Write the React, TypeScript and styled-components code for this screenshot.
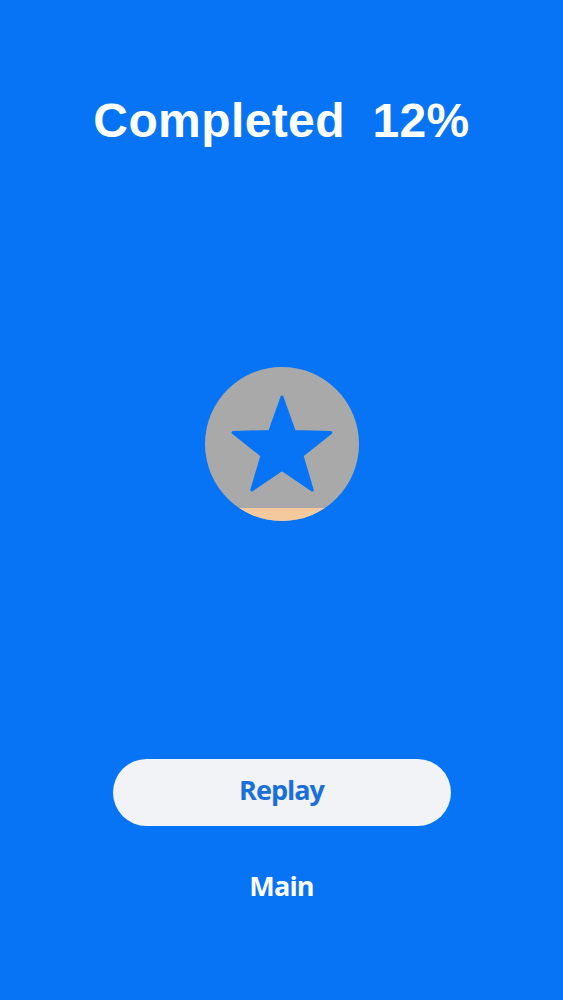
import styled, { createGlobalStyle } from "styled-components";

const GlobalStyle = createGlobalStyle`
  html, body {
    margin: 0;
    padding: 0;
    background: #0674f4;
  }
`;

const Screen = styled.div`
  width: 563px;
  height: 1000px;
  background: #0674f4;
  display: flex;
  flex-direction: column;
  align-items: center;
  font-family: "Liberation Sans", Arial, sans-serif;
`;

const Title = styled.h1`
  margin: 96px 0 0;
  font-size: 48px;
  line-height: 50px;
  font-weight: 700;
  color: #ffffff;
  white-space: pre;
  letter-spacing: 0.4px;
`;

const Badge = styled.div`
  margin-top: 221px;
  width: 154px;
  height: 154px;
  border-radius: 50%;
  overflow: hidden;
  background: #a9a9a9;
  display: grid;
`;

const Fill = styled.div<{ $height: number }>`
  grid-area: 1 / 1;
  align-self: end;
  height: ${(p) => p.$height}px;
  background: #f4c99d;
`;

const Star = styled.svg`
  grid-area: 1 / 1;
  width: 154px;
  height: 154px;
`;

const ReplayButton = styled.button`
  margin-top: 238px;
  width: 338px;
  height: 67px;
  padding: 0 0 6px;
  border: none;
  border-radius: 34px;
  background: #f2f3f6;
  color: #1b6fd9;
  font-family: "Open Sans", "Noto Sans", sans-serif;
  font-weight: 700;
  font-size: 27px;
  letter-spacing: -1px;
  cursor: pointer;
`;

const MainLink = styled.button`
  margin-top: 40px;
  border: none;
  background: none;
  color: #ffffff;
  font-family: "Open Sans", "Noto Sans", sans-serif;
  font-weight: 700;
  font-size: 27px;
  letter-spacing: -0.8px;
  cursor: pointer;
`;

const starPoints =
  "77,30 89.3,64.5 125.9,65.5 97,88.5 107.2,123 77,102.5 46.8,123 57,88.5 28.1,65.5 64.7,64.5";

const App = () => {
  return (
    <>
      <GlobalStyle />
      <Screen>
        <Title>{"Completed  12%"}</Title>
        <Badge>
          <Fill $height={13} />
          <Star viewBox="0 0 154 154">
            <polygon
              points={starPoints}
              fill="#0674f4"
              stroke="#0674f4"
              strokeWidth={3}
              strokeLinejoin="round"
            />
          </Star>
        </Badge>
        <ReplayButton>Replay</ReplayButton>
        <MainLink>Main</MainLink>
      </Screen>
    </>
  );
};

export default App;
